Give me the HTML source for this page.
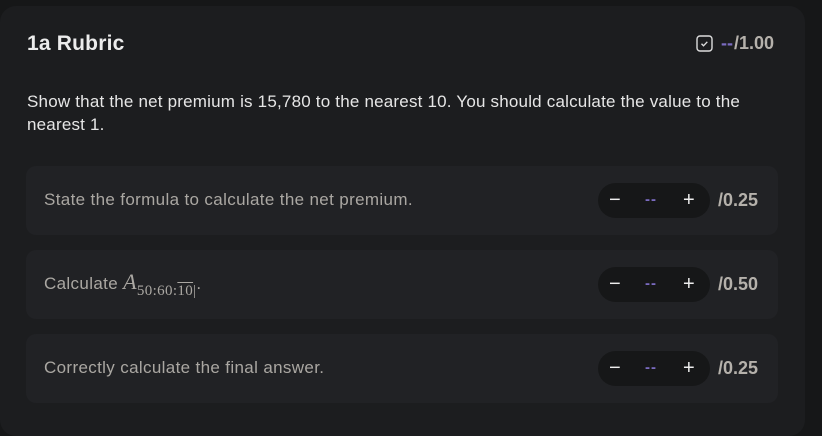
<!DOCTYPE html>
<html><head><style>
body{margin:0;width:822px;height:422px;background:#161718;font-family:"Liberation Sans",sans-serif;overflow:hidden;position:relative}
.card{position:absolute;left:0;top:6px;width:805px;height:430px;background:#1c1d1f;border-radius:16px}
.title{position:absolute;left:27px;top:26px;font-size:21px;font-weight:bold;color:#ececec;letter-spacing:0.2px}
.score{position:absolute;left:696px;top:27px;display:flex;align-items:center;font-size:18px;font-weight:bold;color:#b5b1ab}
.score .d{color:#7a6bc0;margin-left:8px;margin-right:1px}
.q{position:absolute;left:27px;top:84px;width:740px;font-size:17px;line-height:23px;color:#e6e6e6;letter-spacing:0.2px}
.row{position:absolute;left:26px;width:752px;height:69px;background:#212225;border-radius:10px}
.row .t{position:absolute;left:18px;top:24px;font-size:17px;line-height:20px;color:#aaa7a2;letter-spacing:0.35px}
.pill{position:absolute;left:572px;top:17px;width:112px;height:35px;background:#161718;border-radius:18px;color:#eee;font-size:20px}
.pill .m{position:absolute;left:11px;top:6px}
.pill .p{position:absolute;left:85px;top:6px}
.pill .dd{position:absolute;left:47px;top:8px;font-size:15px;color:#7a6bc0;font-weight:bold;letter-spacing:1px}
.row .mx{position:absolute;left:692px;top:24px;font-size:18px;font-weight:bold;color:#b5b1ab}
</style></head><body>
<div class="card">
<div class="title">1a Rubric</div>
<div class="score"><svg width="17" height="17" viewBox="0 0 17 17"><rect x="1" y="1" width="15" height="15" rx="3" fill="none" stroke="#ddd" stroke-width="1.4"/><path d="M5.5 8.8l2 2 3.8-4" fill="none" stroke="#ddd" stroke-width="1.4"/></svg><span class="d">--</span>/1.00</div>
<div class="q">Show that the net premium is 15,780 to the nearest 10. You should calculate the value to the nearest 1.</div>
</div>
<div class="row" style="top:166px"><div class="t">State the formula to calculate the net premium.</div><div class="pill"><span class="m">−</span><span class="dd">--</span><span class="p">+</span></div><div class="mx">/0.25</div></div>
<div class="row" style="top:250px"><div class="t" style="top:22px">Calculate <i style="font-family:'Liberation Serif',serif;font-size:22px">A</i><span style="font-family:'Liberation Serif',serif;font-size:15px;position:relative;top:6px">50:60:<span style="text-decoration:overline">10</span>|</span>.</div><div class="pill"><span class="m">−</span><span class="dd">--</span><span class="p">+</span></div><div class="mx">/0.50</div></div>
<div class="row" style="top:334px"><div class="t">Correctly calculate the final answer.</div><div class="pill"><span class="m">−</span><span class="dd">--</span><span class="p">+</span></div><div class="mx">/0.25</div></div>
</body></html>
